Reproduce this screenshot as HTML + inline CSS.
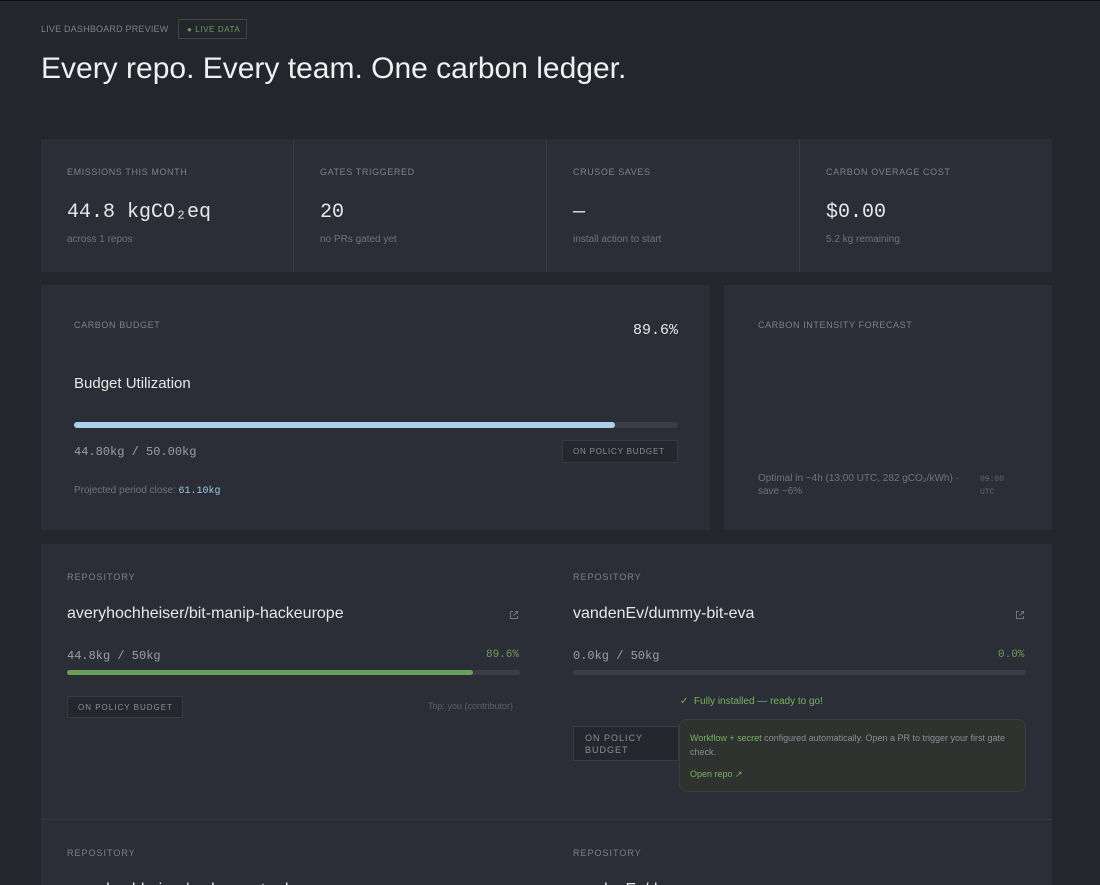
<!DOCTYPE html>
<html><head><meta charset="utf-8"><style>
*{margin:0;padding:0;box-sizing:border-box}
html,body{width:1100px;height:885px;overflow:hidden}
body{background:#23262d;font-family:"Liberation Sans",sans-serif;color:#e6e7e9;position:relative;border-top:1px solid #0c0d10}
.a{position:absolute;white-space:nowrap}
.lbl{font-size:9px;letter-spacing:0.6px;color:#7d818a;text-transform:uppercase}
.card{background:#2b2e36}
.mono{font-family:"Liberation Mono",monospace}
.sub{font-size:10px;color:#6f737c}
.badge{border:1px solid #383b43;background:#24272e;font-size:9px;letter-spacing:1px;color:#8a8e96}
.ext{width:10px;height:10px}
</style></head><body>
<div class="a lbl" style="left:41px;top:23px;letter-spacing:0.2px">Live Dashboard Preview</div>
<div class="a" style="left:178px;top:18px;width:69px;height:20px;border:1px solid #3b4a3a;font-size:8px;letter-spacing:0.6px;color:#6c9a5e;padding:5px 0 0 8px">● LIVE DATA</div>
<div class="a" style="left:41px;top:51px;font-size:30px;color:#f0f0f0">Every repo. Every team. One carbon ledger.</div>

<div class="a card" style="left:41px;top:138px;width:1011px;height:133px"></div>
<div class="a" style="left:293px;top:138px;width:1px;height:133px;background:#383b43"></div>
<div class="a" style="left:546px;top:138px;width:1px;height:133px;background:#383b43"></div>
<div class="a" style="left:799px;top:138px;width:1px;height:133px;background:#383b43"></div>
<div class="a lbl" style="left:67px;top:166px">Emissions this month</div>
<div class="a mono" style="left:67px;top:200px;font-size:20px">44.8 kgCO₂eq</div>
<div class="a sub" style="left:67px;top:233px">across 1 repos</div>
<div class="a lbl" style="left:320px;top:166px">Gates triggered</div>
<div class="a mono" style="left:320px;top:200px;font-size:20px">20</div>
<div class="a sub" style="left:320px;top:233px">no PRs gated yet</div>
<div class="a lbl" style="left:573px;top:166px">Crusoe saves</div>
<div class="a mono" style="left:573px;top:200px;font-size:20px">—</div>
<div class="a sub" style="left:573px;top:233px">install action to start</div>
<div class="a lbl" style="left:826px;top:166px">Carbon overage cost</div>
<div class="a mono" style="left:826px;top:200px;font-size:20px">$0.00</div>
<div class="a sub" style="left:826px;top:233px">5.2 kg remaining</div>

<div class="a card" style="left:41px;top:284px;width:669px;height:245px"></div>
<div class="a lbl" style="left:74px;top:319px">Carbon budget</div>
<div class="a mono" style="left:633px;top:321px;font-size:15px">89.6%</div>
<div class="a" style="left:74px;top:374px;font-size:15px">Budget Utilization</div>
<div class="a" style="left:74px;top:421px;width:604px;height:6px;border-radius:3px;background:#3a3d45"><div style="width:541px;height:6px;border-radius:3px;background:#a9d3ec"></div></div>
<div class="a mono" style="left:74px;top:444px;font-size:12px;color:#9a9ea6">44.80kg / 50.00kg</div>
<div class="a badge" style="left:562px;top:439px;width:116px;height:23px;padding:6px 0 0 10px;font-size:8px;letter-spacing:0.8px">ON POLICY BUDGET</div>
<div class="a sub" style="left:74px;top:484px">Projected period close: <span class="mono" style="color:#9ec9e4">61.10kg</span></div>

<div class="a card" style="left:724px;top:284px;width:328px;height:245px"></div>
<div class="a lbl" style="left:758px;top:319px">Carbon intensity forecast</div>
<div class="a sub" style="left:758px;top:471px;width:215px;line-height:13px;white-space:normal">Optimal in ~4h (13:00 UTC, 282 gCO₂/kWh) · save ~6%</div>
<div class="a mono" style="left:980px;top:472px;font-size:8px;color:#5f636b;line-height:13px">09:00<br>UTC</div>

<div class="a card" style="left:41px;top:543px;width:1011px;height:342px"></div>
<div class="a" style="left:41px;top:818px;width:1011px;height:1px;background:#353840"></div>

<div class="a lbl" style="left:67px;top:571px;letter-spacing:1px">Repository</div>
<div class="a" style="left:67px;top:604px;font-size:16px">averyhochheiser/bit-manip-hackeurope</div>
<svg class="a ext" style="left:509px;top:609px" viewBox="0 0 10 10" fill="none" stroke="#6f737c" stroke-width="1"><path d="M4 1.5H1.5v7h7V6M6 1.5h2.5V4M8.5 1.5L4.5 5.5"/></svg>
<div class="a mono" style="left:67px;top:648px;font-size:12px;color:#9a9ea6">44.8kg / 50kg</div>
<div class="a mono" style="left:486px;top:648px;font-size:11px;color:#6f9a5c">89.6%</div>
<div class="a" style="left:67px;top:669px;width:453px;height:5px;border-radius:3px;background:#3a3d45"><div style="width:406px;height:5px;border-radius:3px;background:#6a9f59"></div></div>
<div class="a badge" style="left:67px;top:695px;width:116px;height:22px;padding:6px 0 0 10px;font-size:8px">ON POLICY BUDGET</div>
<div class="a sub" style="left:428px;top:700px;font-size:9px;color:#5c6068">Top: you (contributor)</div>

<div class="a lbl" style="left:573px;top:571px;letter-spacing:1px">Repository</div>
<div class="a" style="left:573px;top:604px;font-size:16px">vandenEv/dummy-bit-eva</div>
<svg class="a ext" style="left:1015px;top:609px" viewBox="0 0 10 10" fill="none" stroke="#6f737c" stroke-width="1"><path d="M4 1.5H1.5v7h7V6M6 1.5h2.5V4M8.5 1.5L4.5 5.5"/></svg>
<div class="a mono" style="left:573px;top:648px;font-size:12px;color:#9a9ea6">0.0kg / 50kg</div>
<div class="a mono" style="left:998px;top:648px;font-size:11px;color:#6f9a5c">0.0%</div>
<div class="a" style="left:573px;top:669px;width:453px;height:5px;border-radius:3px;background:#3a3d45"></div>
<div class="a" style="left:680px;top:695px;font-size:10px;color:#79b064">✓&nbsp; Fully installed — ready to go!</div>
<div class="a badge" style="left:573px;top:725px;width:106px;height:35px;padding:5px 0 0 11px;line-height:12px">ON POLICY<br>BUDGET</div>
<div class="a" style="left:679px;top:718px;width:347px;height:73px;border:1px solid #3a3f3a;border-radius:8px;background:#2e332f;padding:11px 10px;font-size:9px;line-height:14px;color:#8a8e96;white-space:normal"><span style="color:#79b064">Workflow + secret</span> configured automatically. Open a PR to trigger your first gate check.<div style="margin-top:8px;color:#79b064">Open repo ↗</div></div>

<div class="a lbl" style="left:67px;top:847px;letter-spacing:1px">Repository</div>
<div class="a" style="left:67px;top:880px;font-size:16px">averyhochheiser/carbon-gate-demo</div>
<div class="a lbl" style="left:573px;top:847px;letter-spacing:1px">Repository</div>
<div class="a" style="left:573px;top:880px;font-size:16px">vandenEv/demo</div>
</body></html>
